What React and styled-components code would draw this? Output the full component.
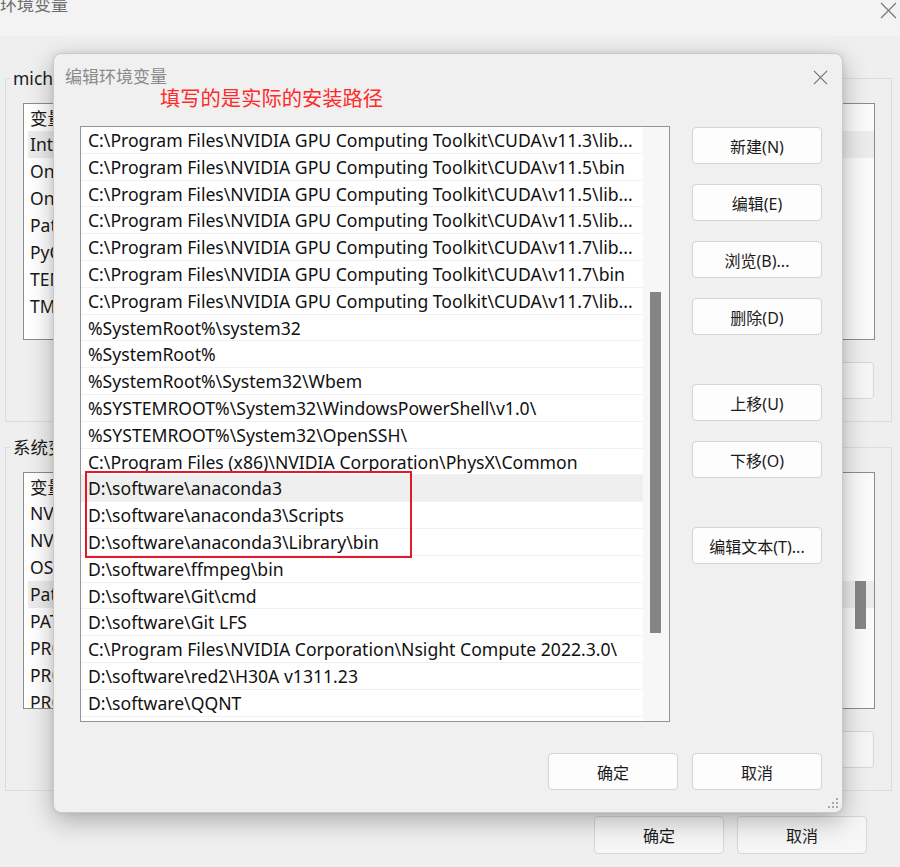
import styled, { createGlobalStyle } from 'styled-components';

const GlobalStyle = createGlobalStyle`
  html, body {
    margin: 0;
    padding: 0;
    background: #efefef;
  }
  body {
    font-family: "Noto Sans", "Noto Sans CJK SC", sans-serif;
    color: #1a1a1a;
  }
  #root {
    width: 900px;
    height: 867px;
    overflow: hidden;
  }
`;

const paths = [
    String.raw`C:\Program Files\NVIDIA GPU Computing Toolkit\CUDA\v11.3\lib...`,
    String.raw`C:\Program Files\NVIDIA GPU Computing Toolkit\CUDA\v11.5\bin`,
    String.raw`C:\Program Files\NVIDIA GPU Computing Toolkit\CUDA\v11.5\lib...`,
    String.raw`C:\Program Files\NVIDIA GPU Computing Toolkit\CUDA\v11.5\lib...`,
    String.raw`C:\Program Files\NVIDIA GPU Computing Toolkit\CUDA\v11.7\lib...`,
    String.raw`C:\Program Files\NVIDIA GPU Computing Toolkit\CUDA\v11.7\bin`,
    String.raw`C:\Program Files\NVIDIA GPU Computing Toolkit\CUDA\v11.7\lib...`,
    String.raw`%SystemRoot%\system32`,
    String.raw`%SystemRoot%`,
    String.raw`%SystemRoot%\System32\Wbem`,
    String.raw`%SYSTEMROOT%\System32\WindowsPowerShell\v1.0\ `.trim(),
    String.raw`%SYSTEMROOT%\System32\OpenSSH\ `.trim(),
    String.raw`C:\Program Files (x86)\NVIDIA Corporation\PhysX\Common`,
];

const anaconda = [
    String.raw`D:\software\anaconda3`,
    String.raw`D:\software\anaconda3\Scripts`,
    String.raw`D:\software\anaconda3\Library\bin`,
];

const morePaths = [
    String.raw`D:\software\ffmpeg\bin`,
    String.raw`D:\software\Git\cmd`,
    String.raw`D:\software\Git LFS`,
    String.raw`C:\Program Files\NVIDIA Corporation\Nsight Compute 2022.3.0\ `.trim(),
    String.raw`D:\software\red2\H30A v1311.23`,
    String.raw`D:\software\QQNT`,
];

const userVars = ['IntelliJ IDEA', 'OneDrive', 'OneDriveConsumer', 'Path', 'PyCharm', 'TEMP', 'TMP'];
const sysVars = ['NVM_HOME', 'NVM_SYMLINK', 'OS', 'Path', 'PATHEXT', 'PROCESSOR_ARCHITECTURE', 'PROCESSOR_IDENTIFIER', 'PROCESSOR_LEVEL'];

function CloseIcon({ size = 16, color = '#6a6a6a' }) {
    return (
        <svg width={size} height={size} viewBox="0 0 16 16">
            <path d="M1 1 L15 15 M15 1 L1 15" stroke={color} strokeWidth="1.2" fill="none" />
        </svg>
    );
}

function ResizeGrip() {
    const dots = [[10, 2], [10, 6], [6, 6], [10, 10], [6, 10], [2, 10]];
    return (
        <Grip width="13" height="13" viewBox="0 0 13 13">
            {dots.map(([x, y]) => <rect key={`${x}-${y}`} x={x} y={y} width="2" height="2" fill="#a8a8a8" />)}
        </Grip>
    );
}

function App() {
    return (
        <Desktop>
            <GlobalStyle />
            <BgWindow>
                <BgTitleBar>
                    <BgTitle>环境变量</BgTitle>
                    <CloseIcon size={17} color="#7a7a7a" />
                </BgTitleBar>

                <Group>
                    <Legend>michael 的用户变量(U)</Legend>
                    <BgList>
                        <BgHeader><span>变量</span><span>值</span></BgHeader>
                        {userVars.map((v, i) => <BgRow key={v} $selected={i === 0}>{v}</BgRow>)}
                    </BgList>
                    <BgButtonRow>
                        <Button $muted>新建(N)...</Button>
                        <Button $muted>编辑(E)...</Button>
                        <Button $muted>删除(D)</Button>
                    </BgButtonRow>
                </Group>

                <Group $second>
                    <Legend>系统变量(S)</Legend>
                    <BgList>
                        <BgHeader><span>变量</span><span>值</span></BgHeader>
                        {sysVars.map((v, i) => <BgRow key={v} $selected={i === 3}>{v}</BgRow>)}
                        <BgScroll />
                    </BgList>
                    <BgButtonRow>
                        <Button $muted>新建(W)...</Button>
                        <Button $muted>编辑(I)...</Button>
                        <Button $muted>删除(L)</Button>
                    </BgButtonRow>
                </Group>

                <BgFooter>
                    <Button $muted>确定</Button>
                    <Button $muted>取消</Button>
                </BgFooter>
            </BgWindow>

            <Dialog>
                <DialogTitleBar>
                    <DialogTitle>编辑环境变量</DialogTitle>
                    <CloseIcon size={15} color="#707070" />
                </DialogTitleBar>
                <Note>填写的是实际的安装路径</Note>

                <DialogBody>
                    <PathList>
                        <Rows>
                            {paths.map((p, i) => <PathRow key={i}>{p}</PathRow>)}
                            <Highlight>
                                {anaconda.map((p, i) => <PathRow key={p} $selected={i === 0}>{p}</PathRow>)}
                            </Highlight>
                            {morePaths.map((p) => <PathRow key={p}>{p}</PathRow>)}
                        </Rows>
                        <ScrollTrack>
                            <Thumb />
                        </ScrollTrack>
                    </PathList>

                    <ButtonColumn>
                        <Button>新建(N)</Button>
                        <Button>编辑(E)</Button>
                        <Button>浏览(B)...</Button>
                        <Button>删除(D)</Button>
                        <Button $gapAbove>上移(U)</Button>
                        <Button>下移(O)</Button>
                        <Button $gapAbove>编辑文本(T)...</Button>
                    </ButtonColumn>
                </DialogBody>

                <DialogFooter>
                    <Button>确定</Button>
                    <Button>取消</Button>
                </DialogFooter>
                <ResizeGrip />
            </Dialog>
        </Desktop>
    );
}

const Desktop = styled.div`
  position: relative;
  width: 900px;
  height: 867px;
  overflow: hidden;
  background: #efefef;
`;

const BgWindow = styled.div`
  display: flex;
  flex-direction: column;
  padding: 0 8px 0 5px;
`;

const BgTitleBar = styled.div`
  height: 69px;
  display: flex;
  justify-content: space-between;
  align-items: flex-start;
  padding-right: 3px;
  background: linear-gradient(#f3f3f3 0, #f3f3f3 36px, #efefef 36px);
  margin: 0 -8px 0 -5px;
  padding-left: 0;

  svg {
    margin-top: 2px;
  }
`;

const BgTitle = styled.span`
  font-size: 17px;
  line-height: 18px;
  margin-top: -4px;
  color: #6d6d6d;
`;

const Group = styled.fieldset`
  margin: ${(p) => (p.$second ? '16px 0 0 0' : '0')};
  padding: 16px 16px 22px 17px;
  border: 1px solid #dcdcdc;
  min-width: 0;
`;

const Legend = styled.legend`
  font-size: 17.5px;
  line-height: 18px;
  padding: 0 3px;
  margin-left: -13px;
  color: #1a1a1a;
`;

const BgList = styled.div`
  position: relative;
  height: 235px;
  border: 1px solid #8c8c8c;
  background: linear-gradient(90deg, #ffffff 0%, #fafafa 100%);
  overflow: hidden;
`;

const BgHeader = styled.div`
  height: 27px;
  display: grid;
  grid-template-columns: 240px 1fr;
  align-items: center;
  padding-left: 6px;
  font-size: 17.5px;
  color: #1a1a1a;
`;

const BgRow = styled.div`
  height: 27px;
  line-height: 27px;
  margin-left: 4px;
  padding-left: 2px;
  font-size: 17.5px;
  white-space: nowrap;
  background: ${(p) => (p.$selected ? '#ececec' : 'transparent')};
`;

const BgScroll = styled.div`
  position: absolute;
  right: 8px;
  top: 108px;
  width: 11px;
  height: 48px;
  background: #858585;
`;

const BgButtonRow = styled.div`
  margin-top: 22px;
  display: flex;
  justify-content: flex-end;
  gap: 13px;
  padding-right: 1px;
`;

const BgFooter = styled.div`
  margin-top: 25px;
  display: flex;
  justify-content: flex-end;
  gap: 13px;
  padding-right: 25px;

  button {
    height: 38px;
  }
`;

const Button = styled.button`
  width: 130px;
  height: 37px;
  flex: none;
  padding: 0;
  margin-top: ${(p) => (p.$gapAbove ? '29px' : '0')};
  border: 1px solid ${(p) => (p.$muted ? '#d6d6d6' : '#d3d3d3')};
  border-radius: 4px;
  background: ${(p) => (p.$muted ? '#f6f6f6' : '#fdfdfd')};
  font-family: "Noto Sans", "Noto Sans CJK SC", sans-serif;
  font-size: 16px;
  color: #1b1b1b;
  white-space: nowrap;
`;

const Dialog = styled.div`
  position: absolute;
  left: 53px;
  top: 53px;
  width: 788px;
  height: 758px;
  display: flex;
  flex-direction: column;
  background: #f0f0f0;
  border: 1px solid #c9c9c9;
  border-radius: 8px;
  box-shadow: 0 8px 26px rgba(0, 0, 0, 0.28), 0 0 6px rgba(0, 0, 0, 0.08);
`;

const DialogTitleBar = styled.div`
  height: 34px;
  display: flex;
  justify-content: space-between;
  align-items: center;
  padding: 12px 14px 0 11px;
  box-sizing: border-box;
  border-radius: 8px 8px 0 0;
`;

const DialogTitle = styled.span`
  font-size: 17px;
  line-height: 18px;
  color: #8a8a8a;
`;

const Note = styled.div`
  padding-left: 106px;
  height: 20px;
  font-size: 20.3px;
  line-height: 20px;
  color: #ff2a2a;
  white-space: nowrap;
`;

const DialogBody = styled.div`
  margin-top: 18px;
  display: flex;
  padding-left: 26px;
`;

const PathList = styled.div`
  width: 588px;
  height: 594px;
  border: 1px solid #959595;
  display: flex;
  background: #ffffff;
  overflow: hidden;
`;

const Rows = styled.div`
  width: 562px;
  display: flex;
  flex-direction: column;
`;

const PathRow = styled.div`
  height: 26.8px;
  line-height: 26px;
  flex: none;
  box-sizing: border-box;
  padding-left: 7px;
  font-size: 17.6px;
  color: #111;
  white-space: nowrap;
  overflow: hidden;
  border-bottom: 1px solid #f1f1f1;
  background: ${(p) => (p.$selected ? '#efefef' : '#ffffff')};
`;

const Highlight = styled.div`
  position: relative;

  &::after {
    content: '';
    position: absolute;
    left: 4px;
    top: -4px;
    width: 327px;
    bottom: -2px;
    border: 2px solid #e3192b;
    box-sizing: border-box;
    pointer-events: none;
  }
`;

const ScrollTrack = styled.div`
  flex: 1;
  background: #f7f7f7;
  padding: 165px 0 0 7px;
`;

const Thumb = styled.div`
  width: 11px;
  height: 341px;
  background: #858585;
`;

const ButtonColumn = styled.div`
  margin-left: 22px;
  margin-top: 1px;
  display: flex;
  flex-direction: column;
  gap: 20px;
`;

const DialogFooter = styled.div`
  margin-top: 31px;
  display: flex;
  justify-content: flex-end;
  gap: 14px;
  padding-right: 20px;
`;

const Grip = styled.svg`
  position: absolute;
  right: 3px;
  bottom: 3px;
`;

export default App;
